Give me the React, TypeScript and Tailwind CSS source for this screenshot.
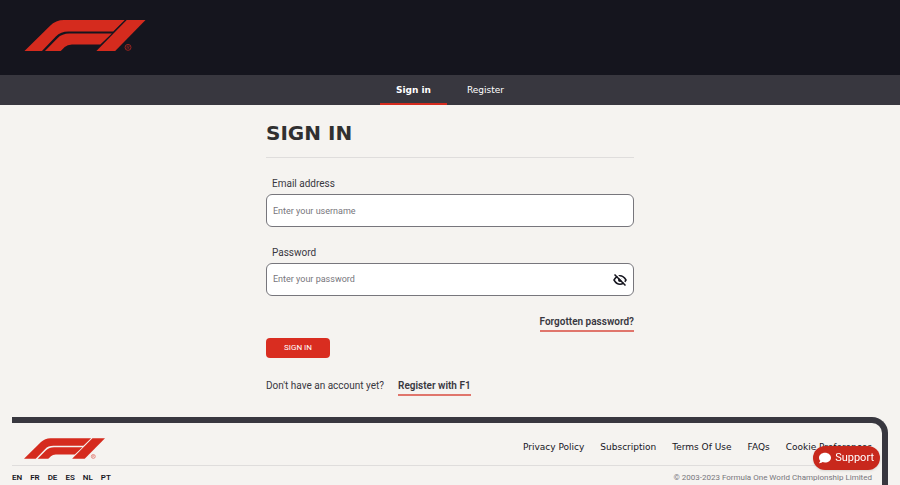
import { useState } from 'react';
import { FaComment } from 'react-icons/fa';

const languages = ['EN', 'FR', 'DE', 'ES', 'NL', 'PT'];

const footerLinks = ['Privacy Policy', 'Subscription', 'Terms Of Use', 'FAQs', 'Cookie Preferences'];

function Logo({ className }: { className: string }) {
  return (
    <svg viewBox="73 59 367 94" className={className} role="img" aria-label="F1">
      <path d="M73 153 L150 77 Q168 59 193 59 H377 L342 94 H206 Q183 94 168 109 L126 153 Z" />
      <path d="M135 153 L173 114 Q187 100 209 100 H338 L303 133 H217 Q203 133 195 141 L183 153 Z" />
      <path d="M291 153 L383 59 H440 L348 153 Z" />
      <g opacity="0.7">
        <circle cx="387" cy="142" r="9" fill="none" stroke="currentColor" strokeWidth="3" />
        <path d="M384 147 V138 H388 Q391 138 391 140 Q391 143 387 143 L391 147" fill="none" stroke="currentColor" strokeWidth="2" />
      </g>
    </svg>
  );
}

function EyeIcon({ crossed }: { crossed: boolean }) {
  return (
    <svg viewBox="0 0 28 24" className="block w-3.5 h-3" fill="none" stroke="currentColor" strokeWidth="3">
      <path d="M2 12 Q7 3.5 14 3.5 Q21 3.5 26 12 Q21 20.5 14 20.5 Q7 20.5 2 12 Z" />
      <circle cx="14" cy="12" r="4" fill="currentColor" stroke="none" />
      {crossed && (
        <>
          <path d="M6 0 L27 21" stroke="white" strokeWidth="3" />
          <path d="M3 1 L25 23" />
        </>
      )}
    </svg>
  );
}

export default function App() {
  const [showPassword, setShowPassword] = useState(false);

  return (
    <div className="min-h-screen flex flex-col overflow-hidden bg-[#f5f3f0] font-['Roboto',sans-serif] text-[#38373f]">
      {/* Header */}
      <header>
        <div className="bg-[#15151e] px-6 pt-5 pb-6">
          <a href="#" className="block w-fit">
            <Logo className="block w-[122px] h-[31px] fill-[#d52b1e] text-[#d52b1e]" />
          </a>
        </div>
        <nav className="flex justify-center gap-1 h-[30px] bg-[#38373f] text-white font-['DejaVu_Sans',sans-serif] text-[9px]">
          <a href="#" className="flex items-center px-4 pt-1 border-b-2 border-[#d52b1e] font-bold">
            Sign in
          </a>
          <a href="#" className="flex items-center px-4 pt-1 border-b-2 border-transparent">
            Register
          </a>
        </nav>
      </header>

      {/* Sign in form */}
      <main className="w-full max-w-[368px] mx-auto pt-4 pb-[21px]">
        <h1 className="pb-3 border-b border-[#dfdddc] font-['DejaVu_Sans',sans-serif] font-bold text-[20px] leading-6 text-[#303030]">
          SIGN IN
        </h1>
        <form onSubmit={(e) => e.preventDefault()}>
          <label htmlFor="email" className="block mt-5 pl-1.5 text-[10px] leading-3">
            Email address
          </label>
          <input
            id="email"
            type="text"
            placeholder="Enter your username"
            className="block w-full h-[33px] mt-1 px-1.5 rounded-md border border-[#77767c] bg-white text-[9px] placeholder:text-[#77767c]"
          />

          <label htmlFor="password" className="block mt-5 pl-1.5 text-[10px] leading-3">
            Password
          </label>
          <div className="flex items-center h-[33px] mt-1 pr-1.5 rounded-md border border-[#77767c] bg-white">
            <input
              id="password"
              type={showPassword ? 'text' : 'password'}
              placeholder="Enter your password"
              className="flex-1 min-w-0 px-1.5 bg-transparent text-[9px] placeholder:text-[#77767c]"
            />
            <button
              type="button"
              aria-label="Show password"
              onClick={() => setShowPassword(!showPassword)}
              className="text-[#15151e]"
            >
              <EyeIcon crossed={!showPassword} />
            </button>
          </div>

          <div className="flex justify-end mt-5">
            <a href="#" className="pb-0.5 border-b-2 border-[#e0756c] text-[10px] leading-3 font-semibold">
              Forgotten password?
            </a>
          </div>
          <button
            type="submit"
            className="block w-16 h-5 mt-1.5 rounded-sm bg-[#d92d20] text-white text-[8px]"
          >
            SIGN IN
          </button>
        </form>
        <p className="flex gap-3.5 mt-5.5 text-[10px] leading-3">
          Don&apos;t have an account yet?
          <a href="#" className="pb-0.5 border-b-2 border-[#e0756c] font-semibold">
            Register with F1
          </a>
        </p>
      </main>

      {/* Footer */}
      <footer className="flex-1 mx-3 pr-2 rounded-tr-2xl border-t-6 border-r-6 border-[#38373f]">
        <div className="flex items-center justify-between h-[43px] pl-3 pr-0.5 border-b border-[#dfdddc]">
          <a href="#">
            <Logo className="block w-[81px] h-[21px] mt-2 fill-[#d52b1e] text-[#d52b1e]" />
          </a>
          <nav className="flex gap-4 mt-2 font-['DejaVu_Sans',sans-serif] text-[9px] text-[#15151e]">
            {footerLinks.map((link) => (
              <a key={link} href="#">
                {link}
              </a>
            ))}
          </nav>
        </div>
        <div className="flex items-center justify-between pt-1.5 pr-0.5 text-[8px] leading-3">
          <div className="flex gap-2 font-semibold text-[#15151e]">
            {languages.map((lang) => (
              <a key={lang} href="#">
                {lang}
              </a>
            ))}
          </div>
          <p className="text-[#77767c]">© 2003-2023 Formula One World Championship Limited</p>
        </div>
      </footer>

      {/* Support widget */}
      <button
        type="button"
        className="fixed right-5 bottom-[15px] flex items-center gap-1 h-6 px-1.5 rounded-full bg-[#c8281c] text-white text-[11px] shadow"
      >
        <FaComment size={12} />
        Support
      </button>
    </div>
  );
}
